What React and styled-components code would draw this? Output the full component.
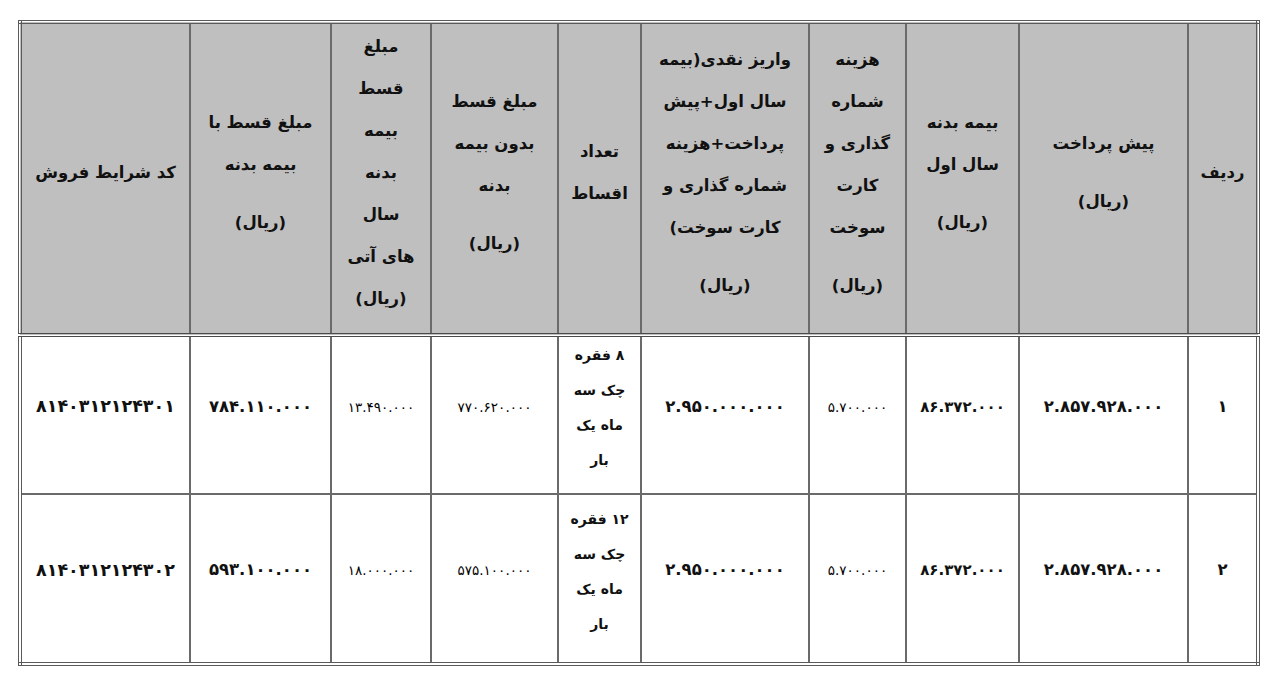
import React from 'react';
import styled, { createGlobalStyle } from 'styled-components';

const GlobalStyle = createGlobalStyle`
    html, body {
        margin: 0;
        padding: 0;
        background: #ffffff;
    }
    body {
        font-family: "DejaVu Sans", "Noto Sans", sans-serif;
        color: #111111;
    }
`;

// ستون ها از راست به چپ
const columns = [
    { width: 70, title: ['ردیف'] },
    { width: 169, title: ['پیش پرداخت'], unit: true },
    { width: 113, title: ['بیمه بدنه', 'سال اول'], unit: true },
    { width: 97, title: ['هزینه', 'شماره', 'گذاری و', 'کارت', 'سوخت'], unit: true },
    { width: 168, title: ['واریز نقدی(بیمه', 'سال اول+پیش', 'پرداخت+هزینه', 'شماره گذاری و', 'کارت سوخت)'], unit: true },
    { width: 83, title: ['تعداد', 'اقساط'] },
    { width: 127, title: ['مبلغ قسط', 'بدون بیمه', 'بدنه'], unit: true },
    { width: 100, title: ['مبلغ', 'قسط', 'بیمه', 'بدنه', 'سال', 'های آتی'], unit: true, tight: true },
    { width: 141, title: ['مبلغ قسط با', 'بیمه بدنه'], unit: true },
    { width: 170, title: ['کد شرایط فروش'] },
];

const sizes = ['lg', 'lg', 'md', 'sm', 'lg', 'list', 'sm', 'sm', 'lg', 'xl'];

const rows = [
    {
        id: 1,
        height: 159,
        cells: [
            '۱',
            '۲.۸۵۷.۹۲۸.۰۰۰',
            '۸۶.۳۷۲.۰۰۰',
            '۵.۷۰۰.۰۰۰',
            '۲.۹۵۰.۰۰۰.۰۰۰',
            ['۸ فقره', 'چک سه', 'ماه یک', 'بار'],
            '۷۷۰.۶۲۰.۰۰۰',
            '۱۳.۴۹۰.۰۰۰',
            '۷۸۴.۱۱۰.۰۰۰',
            '۸۱۴۰۳۱۲۱۲۴۳۰۱',
        ],
    },
    {
        id: 2,
        height: 170,
        cells: [
            '۲',
            '۲.۸۵۷.۹۲۸.۰۰۰',
            '۸۶.۳۷۲.۰۰۰',
            '۵.۷۰۰.۰۰۰',
            '۲.۹۵۰.۰۰۰.۰۰۰',
            ['۱۲ فقره', 'چک سه', 'ماه یک', 'بار'],
            '۵۷۵.۱۰۰.۰۰۰',
            '۱۸.۰۰۰.۰۰۰',
            '۵۹۳.۱۰۰.۰۰۰',
            '۸۱۴۰۳۱۲۱۲۴۳۰۲',
        ],
    },
];

const fontSizes = { xl: '17.5px', lg: '16.5px', md: '15px', sm: '13.5px' };

function App() {
    return (
        <>
            <GlobalStyle />
            <Page>
                <PriceTable dir="rtl">
                    <colgroup>
                        {columns.map((col, i) => (
                            <col key={i} style={{ width: col.width }} />
                        ))}
                    </colgroup>
                    <thead>
                        <HeadRow>
                            {columns.map((col, i) => (
                                <HeadCell key={i}>
                                    {col.title.map((line) => (
                                        <TitleLine key={line}>{line}</TitleLine>
                                    ))}
                                    {col.unit && <UnitLine $tight={col.tight}>(ریال)</UnitLine>}
                                </HeadCell>
                            ))}
                        </HeadRow>
                    </thead>
                    <tbody>
                        {rows.map((row) => (
                            <BodyRow key={row.id} $height={row.height}>
                                {row.cells.map((value, i) =>
                                    Array.isArray(value) ? (
                                        <BodyCell key={i} $list>
                                            <InstallmentText>
                                                {value.map((line) => (
                                                    <span key={line}>{line}</span>
                                                ))}
                                            </InstallmentText>
                                        </BodyCell>
                                    ) : (
                                        <BodyCell key={i}>
                                            <Amount $size={sizes[i]}>{value}</Amount>
                                        </BodyCell>
                                    )
                                )}
                            </BodyRow>
                        ))}
                    </tbody>
                </PriceTable>
            </Page>
        </>
    );
}

const Page = styled.div`
    padding: 20px 0 0 18px;
`;

const PriceTable = styled.table`
    width: 1240px;
    table-layout: fixed;
    border-collapse: collapse;
    border: 4px double #5a5a5a;
`;

const HeadRow = styled.tr`
    height: 313px;
`;

const HeadCell = styled.th`
    background: #bfbfbf;
    border: 2px solid #6a6a6a;
    border-bottom: 4px double #4a4a4a;
    padding: 0 4px 12px;
    vertical-align: middle;
    text-align: center;
    font-size: 16.5px;
    font-weight: 700;
    color: #111111;
`;

const TitleLine = styled.div`
    line-height: 42px;
    white-space: nowrap;
`;

const UnitLine = styled.div`
    line-height: 42px;
    margin-top: ${(props) => (props.$tight ? '0' : '16px')};
    white-space: nowrap;
`;

const BodyRow = styled.tr`
    height: ${(props) => props.$height}px;
`;

const BodyCell = styled.td`
    border: 2px solid #6a6a6a;
    padding: ${(props) => (props.$list ? '0 4px 14px' : '0 4px 18px')};
    vertical-align: middle;
    text-align: center;
    background: #ffffff;
`;

const Amount = styled.span`
    display: inline-block;
    direction: ltr;
    white-space: nowrap;
    color: ${(props) => (props.$size === 'sm' ? '#000000' : '#111111')};
    font-weight: ${(props) => (props.$size === 'sm' ? 400 : 700)};
    font-size: ${(props) => fontSizes[props.$size]};
`;

const InstallmentText = styled.div`
    display: flex;
    flex-direction: column;
    align-items: center;
    font-size: 14px;
    font-weight: 700;
    line-height: 35px;
`;

export default App;
